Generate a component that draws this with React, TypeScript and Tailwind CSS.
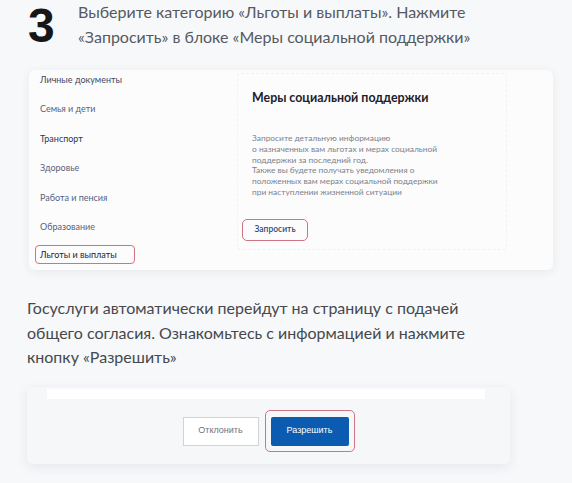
import React from 'react';

const categories = [
  { text: 'Личные документы', cls: 'text-[#3c4866]' },
  { text: 'Семья и дети', cls: 'text-[#56627e]' },
  { text: 'Транспорт', cls: 'text-[#2e3650]' },
  { text: 'Здоровье', cls: 'text-[#56627e]' },
  { text: 'Работа и пенсия', cls: 'text-[#56627e]' },
  { text: 'Образование', cls: 'text-[#56627e]' },
];

const description = [
  'Запросите детальную информацию',
  'о назначенных вам льготах и мерах социальной',
  'поддержки за последний год.',
  'Также вы будете получать уведомления о',
  'положенных вам мерах социальной поддержки',
  'при наступлении жизненной ситуации',
];

const App: React.FC = () => {
  return (
    <div className="w-[572px] h-[483px] overflow-hidden bg-[#f7f8fa] font-['Lato','Liberation_Sans',sans-serif]">
      {/* Step header */}
      <div className="flex items-start h-[50px] pl-[28px]">
        <span className="w-[50px] h-[50px] pt-[2px] font-['Liberation_Sans',sans-serif] font-bold text-[48px] leading-[48px] text-[#161616]">
          3
        </span>
        <p className="-mt-[1px] text-[16px] leading-[25px] text-[#555a60]">
          Выберите категорию «Льготы и выплаты». Нажмите
          <br />
          «Запросить» в блоке «Меры социальной поддержки»
        </p>
      </div>

      {/* Screenshot card: categories */}
      <div className="mt-[20px] ml-[29px] w-[524px] h-[200px] flex bg-[#fcfcfd] rounded-md shadow-[0_2px_10px_rgba(30,40,60,0.07)]">
        <div className="w-[208px] pl-[6px] pt-[4px] flex flex-col gap-[17.4px]">
          {categories.map((c) => (
            <div key={c.text} className={`px-[5px] text-[9px] leading-[12px] ${c.cls}`}>
              {c.text}
            </div>
          ))}
          <div className="-mt-[5px] w-[100px] h-[19px] px-[4px] flex items-center border-[1.5px] border-[#cf7482] rounded-[4px] text-[9px] text-[#1f2330]">
            Льготы и выплаты
          </div>
        </div>

        <div className="mt-[3px] w-[270px] h-[177px] pl-[14px] pt-[17px] border border-dashed border-[#f0f1f4] rounded-sm">
          <div className="text-[12.4px] leading-[14px] font-bold text-[#1d2129]">Меры социальной поддержки</div>
          <div className="mt-[28px] text-[8.4px] leading-[10.8px] text-[#7b818c]">
            {description.map((l) => (
              <div key={l}>{l}</div>
            ))}
          </div>
          <div className="mt-[21px] -ml-[10px] w-[66px] h-[22px] flex items-center justify-center border-[1.5px] border-[#cf7482] rounded-[5px] text-[8.5px] font-semibold text-[#2f4a7a]">
            Запросить
          </div>
        </div>
      </div>

      {/* Explanation */}
      <p className="mt-[26px] pl-[27px] text-[16px] leading-[24.5px] text-[#45484d]">
        Госуслуги автоматически перейдут на страницу с подачей
        <br />
        общего согласия. Ознакомьтесь с информацией и нажмите
        <br />
        кнопку «Разрешить»
      </p>

      {/* Consent card */}
      <div className="mt-[17px] ml-[27px] w-[483px] h-[77px] pt-[2px] bg-[#f6f7f8] rounded-md shadow-[0_3px_12px_rgba(30,40,60,0.08)]">
        <div className="ml-[20px] w-[438px] h-[10px] bg-white" />
        <div className="mt-[11px] flex justify-center items-start gap-[6px]">
          <div className="mt-[7px] w-[76px] h-[29px] flex items-center justify-center bg-white border border-[#cfd4da] font-['Liberation_Sans',sans-serif] text-[9px] text-[#6b7480]">
            Отклонить
          </div>
          <div className="p-[5px] pt-[6px] border-[1.5px] border-[#cf7482] rounded-[5px]">
            <div className="w-[78px] h-[29px] flex items-center justify-center bg-[#0b5bb0] rounded-[2px] font-['Liberation_Sans',sans-serif] text-[9px] text-white">
              Разрешить
            </div>
          </div>
        </div>
      </div>
    </div>
  );
};

export default App;
